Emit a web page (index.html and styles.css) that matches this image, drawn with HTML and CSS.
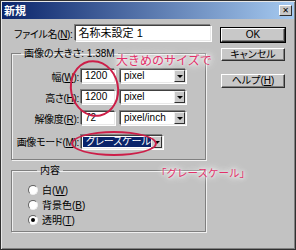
FILE: index.html
```html
<!DOCTYPE html>
<html lang="ja">
<head>
  <meta charset="UTF-8" />
  <title>新規</title>
  <meta name="viewport" content="width=device-width, initial-scale=1.0"/>
  <link rel="stylesheet" href="styles.css">
</head>
<body>

  <div class="dialog">

    <!-- Title bar -->
    <div class="titlebar">
      <span class="title">新規</span>
      <span class="close">✕</span>
    </div>

    <div class="content">

      <!-- Left: form -->
      <div class="main">
        <div class="name-row">
          <label class="name-label">ファイル名(<u>N</u>):</label>
          <div class="field name-field">名称未設定 1</div>
        </div>

        <fieldset class="group size-group">
          <legend>画像の大きさ: 1.38M</legend>
          <div class="form-grid">
            <label>幅(<u>W</u>):</label>
            <div class="field num">1200</div>
            <div class="select unit"><span>pixel</span><span class="arrow"></span></div>

            <label>高さ(<u>H</u>):</label>
            <div class="field num">1200</div>
            <div class="select unit"><span>pixel</span><span class="arrow"></span></div>

            <label>解像度(<u>R</u>):</label>
            <div class="field num">72</div>
            <div class="select unit"><span>pixel/inch</span><span class="arrow"></span></div>

            <label class="mode-label">画像モード(<u>M</u>):</label>
            <div class="select mode"><span class="selected">グレースケール</span><span class="arrow"></span></div>
          </div>
        </fieldset>

        <fieldset class="group contents-group">
          <legend>内容</legend>
          <div class="radio-row"><span class="radio"></span><span>白(<u>W</u>)</span></div>
          <div class="radio-row"><span class="radio"></span><span>背景色(<u>B</u>)</span></div>
          <div class="radio-row"><span class="radio checked"></span><span>透明(<u>T</u>)</span></div>
        </fieldset>
      </div>

      <!-- Right: buttons -->
      <div class="buttons">
        <div class="btn btn-default">OK</div>
        <div class="btn">キャンセル</div>
        <div class="btn btn-help">ヘルプ(<u>H</u>)</div>
      </div>
    </div>

    <!-- Annotations -->
    <div class="ring ring-size"></div>
    <div class="ring ring-mode"></div>
    <div class="note note-size">大きめのサイズで</div>
    <div class="note note-mode">「グレースケール」</div>
  </div>

</body>
</html>
```

FILE: styles.css
```css
* {
  box-sizing: border-box;
}

body {
  margin: 0;
  font-family: "Liberation Sans", "Noto Sans CJK JP", sans-serif;
  font-size: 10px;
  color: #000;
  background-color: #c2c2c2;
  text-autospace: no-autospace;
}

u {
  text-decoration: underline;
}

.dialog {
  position: relative;
  width: 296px;
  height: 250px;
  background-color: #c2c2c2;
  border: 1px solid #303030;
  box-shadow: inset 1px 1px 0 #e8e8e8, inset -1px -1px 0 #808080;
  overflow: hidden;
}

/* TITLE BAR */
.titlebar {
  height: 17px;
  margin: 1px 1px 0;
  padding: 0 2px;
  background: linear-gradient(to right, #0a246a, #a6caf0);
  display: flex;
  align-items: center;
  justify-content: space-between;
}

.title {
  color: #fff;
  font-weight: bold;
  font-size: 11px;
  line-height: 14px;
}

.close {
  width: 13px;
  height: 11px;
  background-color: #c8c8c8;
  border: 1px solid;
  border-color: #fff #303030 #303030 #fff;
  font-size: 8px;
  font-weight: bold;
  line-height: 9px;
  text-align: center;
  font-family: "DejaVu Sans", sans-serif;
}

/* CONTENT */
.content {
  display: flex;
  padding: 6px 0 0 10px;
  gap: 10px;
}

.main {
  width: 200px;
}

.name-row {
  display: flex;
  align-items: center;
  gap: 2px;
  height: 16px;
}

.name-label {
  padding-left: 3px;
  font-feature-settings: "palt";
  letter-spacing: -0.3px;
  white-space: nowrap;
}

.field {
  background-color: #fff;
  border: 1px solid;
  border-color: #404040 #e8e8e8 #e8e8e8 #404040;
  box-shadow: -1px -1px 0 #808080, 1px 1px 0 #fff;
  padding: 0 3px;
  white-space: nowrap;
  line-height: 12px;
}

.name-field {
  flex: 1;
  height: 16px;
  font-size: 11px;
  line-height: 14px;
}

/* GROUPS */
.group {
  margin: 0;
  padding: 0;
  width: 195px;
  border: 1px solid #808080;
  box-shadow: 1px 1px 0 #f0f0f0, inset 1px 1px 0 #f0f0f0;
}

.group legend {
  margin-left: 9px;
  padding: 0 3px;
  line-height: 13px;
  font-feature-settings: "palt";
}

.size-group {
  margin-top: 6px;
  height: 113px;
}

.form-grid {
  display: grid;
  grid-template-columns: 64px 34px 66px;
  grid-auto-rows: 14px;
  column-gap: 5px;
  row-gap: 7px;
  padding-top: 9px;
  align-items: center;
}

.form-grid label {
  text-align: right;
  white-space: nowrap;
  font-feature-settings: "palt";
  letter-spacing: -0.3px;
  margin-right: -3px;
}

.num {
  height: 14px;
  font-size: 10px;
}

.select {
  display: flex;
  align-items: center;
  justify-content: space-between;
  height: 14px;
  background-color: #fff;
  border: 1px solid;
  border-color: #404040 #e8e8e8 #e8e8e8 #404040;
  box-shadow: -1px -1px 0 #808080, 1px 1px 0 #fff;
  padding-left: 3px;
  line-height: 12px;
  white-space: nowrap;
}

.arrow {
  position: relative;
  width: 11px;
  height: 12px;
  background-color: #c8c8c8;
  border: 1px solid;
  border-color: #f0f0f0 #303030 #303030 #f0f0f0;
  flex-shrink: 0;
}

.arrow::after {
  content: "";
  position: absolute;
  left: 2px;
  top: 4px;
  border-left: 3px solid transparent;
  border-right: 3px solid transparent;
  border-top: 3px solid #000;
}

.mode-label {
  margin-top: 5px;
}

.select.mode {
  grid-column: 2 / span 2;
  width: 82px;
  margin-top: 5px;
  padding: 1px 0 1px 1px;
}

.selected {
  flex: 1;
  height: 100%;
  background-color: #0a246a;
  color: #fff;
  padding-left: 3px;
  font-size: 10px;
  line-height: 10px;
  font-feature-settings: "palt";
  overflow: hidden;
}

.contents-group {
  margin-top: 4px;
  height: 68px;
  padding: 6px 0 0 16px;
}

.radio-row {
  display: flex;
  align-items: center;
  gap: 4px;
  height: 13px;
  margin-bottom: 2px;
  font-feature-settings: "palt";
}

.radio {
  position: relative;
  width: 10px;
  height: 10px;
  border-radius: 50%;
  background-color: #fff;
  border: 1px solid;
  border-color: #606060 #f0f0f0 #f0f0f0 #606060;
}

.radio.checked::after {
  content: "";
  position: absolute;
  left: 2px;
  top: 2px;
  width: 4px;
  height: 4px;
  border-radius: 50%;
  background-color: #000;
}

/* BUTTONS */
.buttons {
  display: flex;
  flex-direction: column;
  width: 64px;
  padding-top: 3px;
}

.btn {
  height: 13px;
  margin-bottom: 6px;
  background-color: #c8c8c8;
  border: 1px solid;
  border-color: #fff #303030 #303030 #fff;
  box-shadow: inset -1px -1px 0 #808080;
  text-align: center;
  line-height: 11px;
  font-feature-settings: "palt";
}

.btn-default {
  height: 14px;
  outline: 1px solid #000;
}

.btn-help {
  height: 14px;
  margin-top: 7px;
}

/* ANNOTATIONS */
.ring {
  position: absolute;
  border: 2px solid #cc1e48;
  border-radius: 50%;
}

.ring-size {
  left: 69px;
  top: 59px;
  width: 49px;
  height: 57px;
  transform: rotate(-12deg);
}

.ring-mode {
  left: 70px;
  top: 130px;
  width: 86px;
  height: 25px;
}

.note {
  position: absolute;
  color: #e2306a;
  white-space: nowrap;
  font-family: "Noto Sans CJK JP", sans-serif;
  text-shadow: 0 0 3px #fff, 0 0 6px #fff, 0 0 10px #fff, 0 0 14px #fff;
}

.note-size {
  left: 115px;
  top: 51px;
  font-size: 12px;
  line-height: 16px;
}

.note-mode {
  left: 155px;
  top: 164px;
  font-size: 10.5px;
  line-height: 15px;
}
```
